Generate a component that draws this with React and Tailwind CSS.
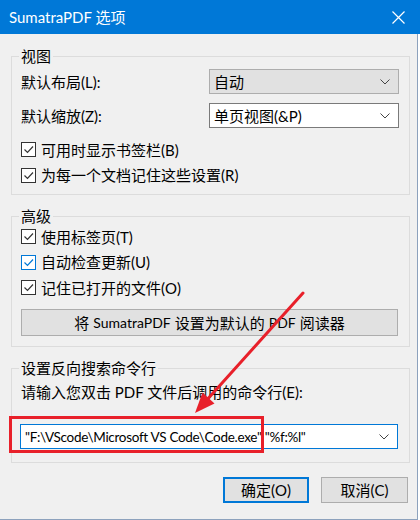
import React from 'react';

const font = { fontFamily: 'Lato, "Noto Sans CJK SC", sans-serif' };

const Chevron = () => (
  <svg width="10" height="6" viewBox="0 0 10 6" className="shrink-0">
    <path d="M0.5 0.5 L5 5 L9.5 0.5" fill="none" stroke="#444" strokeWidth="1" />
  </svg>
);

const CheckBox = ({ label, focused }) => (
  <div className="flex h-[25.5px] items-center">
    <span
      className={`flex h-[15px] w-[15px] items-center justify-center border bg-white ${
        focused ? 'border-[#0078d7]' : 'border-[#333333]'
      }`}
    >
      <svg width="13" height="13" viewBox="0 0 13 13">
        <path
          d="M2.5 6.5 L5.5 9.5 L11 3.5"
          fill="none"
          stroke={focused ? '#0078d7' : '#333333'}
          strokeWidth="1.2"
        />
      </svg>
    </span>
    <span className="ml-[5px] text-[15px] leading-[20px] text-black">{label}</span>
  </div>
);

const Group = ({ title, className = '', children }) => (
  <div className={`relative ml-[11px] w-[399px] border border-[#dcdcdc] ${className}`}>
    <span className="absolute left-[7px] top-[-11px] bg-[#f0f0f0] px-[2px] text-[15px] leading-[20px] text-black">
      {title}
    </span>
    {children}
  </div>
);

const SelectRow = ({ label, value, disabled }) => (
  <div className="flex items-center justify-between">
    <span className="text-[15px] leading-[20px] text-black">{label}</span>
    <div
      className={`flex h-[25px] w-[190px] items-center justify-between border pl-[4px] pr-[8px] ${
        disabled ? 'border-[#adadad] bg-[#e1e1e1]' : 'border-[#7a7a7a] bg-white'
      }`}
    >
      <span className="text-[15px] leading-[20px] text-black">{value}</span>
      <Chevron />
    </div>
  </div>
);

export default function App() {
  return (
    <div className="relative h-[520px] w-[420px] overflow-hidden bg-white" style={font}>
      <div className="flex h-[34px] w-full items-center justify-between bg-[#0078d7] pl-[9px] pr-[15px]">
        <span className="text-[15px] leading-[20px] text-white">SumatraPDF 选项</span>
        <svg width="13" height="13" viewBox="0 0 13 13">
          <path d="M0.5 0.5 L12.5 12.5 M12.5 0.5 L0.5 12.5" stroke="#fff" strokeWidth="1.2" />
        </svg>
      </div>

      <div className="flex h-[486px] w-[418px] flex-col border-b border-r border-[#8da2bd] bg-[#f0f0f0]">
        <Group title="视图" className="mt-[22px] pb-[6px] pl-[9px] pr-[10px] pt-[12px]">
          <div className="flex flex-col gap-[9px]">
            <SelectRow label="默认布局(L):" value="自动" disabled />
            <SelectRow label="默认缩放(Z):" value="单页视图(&P)" />
          </div>
          <div className="mt-[9px]">
            <CheckBox label="可用时显示书签栏(B)" />
            <CheckBox label="为每一个文档记住这些设置(R)" />
          </div>
        </Group>

        <Group title="高级" className="mt-[21px] pb-[10px] pl-[9px] pr-[11px] pt-[7px]">
          <CheckBox label="使用标签页(T)" />
          <CheckBox label="自动检查更新(U)" focused />
          <CheckBox label="记住已打开的文件(O)" />
          <div className="mt-[8.5px] flex h-[27px] items-center justify-center border border-[#adadad] bg-[#e1e1e1] text-[15px] leading-[20px] text-black">
            将 <span className="mx-[4px] text-[14px]">SumatraPDF</span> 设置为默认的{' '}
            <span className="mx-[4px] text-[14px]">PDF</span> 阅读器
          </div>
        </Group>

        <Group title="设置反向搜索命令行" className="mt-[21px] pb-[13px] pl-[8px] pr-[11px] pt-[12px]">
          <div className="ml-[1px] flex h-[22px] items-center text-[15px] leading-[20px] text-black">
            请输入您双击 PDF 文件后调用的命令行(E):
          </div>
          <div className="mt-[21px] flex h-[25px] items-center justify-between border border-[#0078d7] bg-white pl-[4px] pr-[8px]">
            <span className="whitespace-nowrap text-[13.5px] leading-[20px] tracking-[-0.3px] text-black">
              "F:\VScode\Microsoft VS Code\Code.exe" "%f:%l"
            </span>
            <Chevron />
          </div>
        </Group>

        <div className="mt-[14px] flex justify-end gap-[12px] pr-[9px]">
          <button className="flex h-[26px] w-[86px] items-center justify-center border-2 border-[#0078d7] bg-[#e1e1e1] text-[15px] leading-[20px] text-black">
            确定(O)
          </button>
          <button className="flex h-[26px] w-[87px] items-center justify-center border border-[#adadad] bg-[#e1e1e1] text-[15px] leading-[20px] text-black">
            取消(C)
          </button>
        </div>
      </div>

      {/* annotation overlay */}
      <div className="pointer-events-none absolute left-[9px] top-[416px] h-[37px] w-[255px] border-[3px] border-[#e8202a]" />
      <svg className="pointer-events-none absolute left-0 top-0" width="420" height="520">
        <line x1="303" y1="293" x2="205" y2="402" stroke="#e8202a" strokeWidth="3" strokeLinecap="round" />
        <polygon points="195,413 214.5,403.5 202.5,392.5" fill="#e8202a" />
      </svg>
    </div>
  );
}
